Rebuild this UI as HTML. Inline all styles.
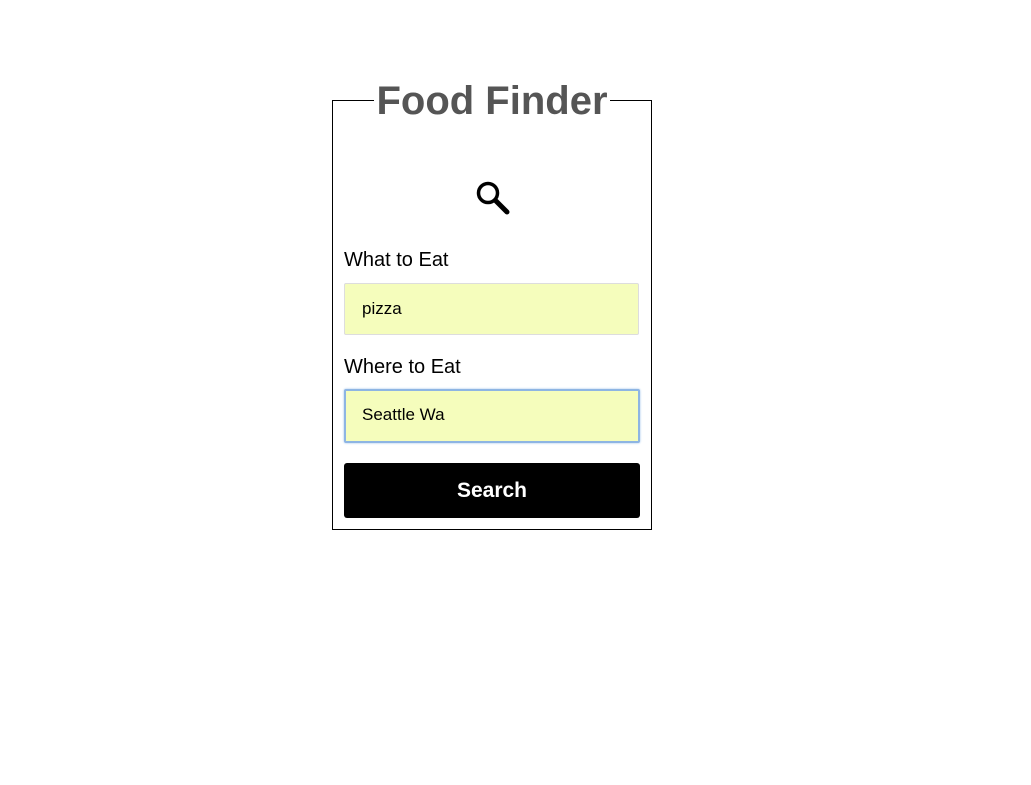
<!DOCTYPE html>
<html><head><style>
body{margin:0;background:#fff;font-family:"Liberation Sans",Arial,sans-serif;}
.box{position:absolute;left:332px;top:100px;width:318px;height:428px;border:1px solid #000;}
.title{position:absolute;left:374px;top:78px;width:236px;text-align:center;background:#fff;font-weight:bold;font-size:40px;line-height:46px;color:#555;}
.lbl{position:absolute;left:344px;font-size:20px;color:#000;}
.inp{position:absolute;left:344px;width:295px;height:52px;background:#f5fdbc;border:1px solid #ddd;box-sizing:border-box;font-size:17px;padding-left:17px;line-height:50px;border-radius:2px;}
.foc{border:2px solid #8eb5e3;box-shadow:0 0 2px #9bc0ea;padding-left:16px;line-height:48px;}
.btn{position:absolute;left:344px;top:463px;width:296px;height:55px;background:#000;border-radius:3px;color:#fff;font-size:21px;font-weight:bold;text-align:center;line-height:55px;}
</style></head><body>
<div class="box"></div>
<div class="title">Food Finder</div>
<svg style="position:absolute;left:473px;top:178px" width="40" height="40" viewBox="0 0 40 40">
<circle cx="15" cy="15" r="9.5" fill="none" stroke="#000" stroke-width="3.5"/>
<line x1="23" y1="23" x2="34" y2="34" stroke="#000" stroke-width="5" stroke-linecap="round"/>
</svg>
<div class="lbl" style="top:249px">What to Eat</div>
<div class="inp" style="top:283px">pizza</div>
<div class="lbl" style="top:356px">Where to Eat</div>
<div class="inp foc" style="top:389px;height:54px;width:296px">Seattle Wa</div>
<div class="btn">Search</div>
</body></html>
